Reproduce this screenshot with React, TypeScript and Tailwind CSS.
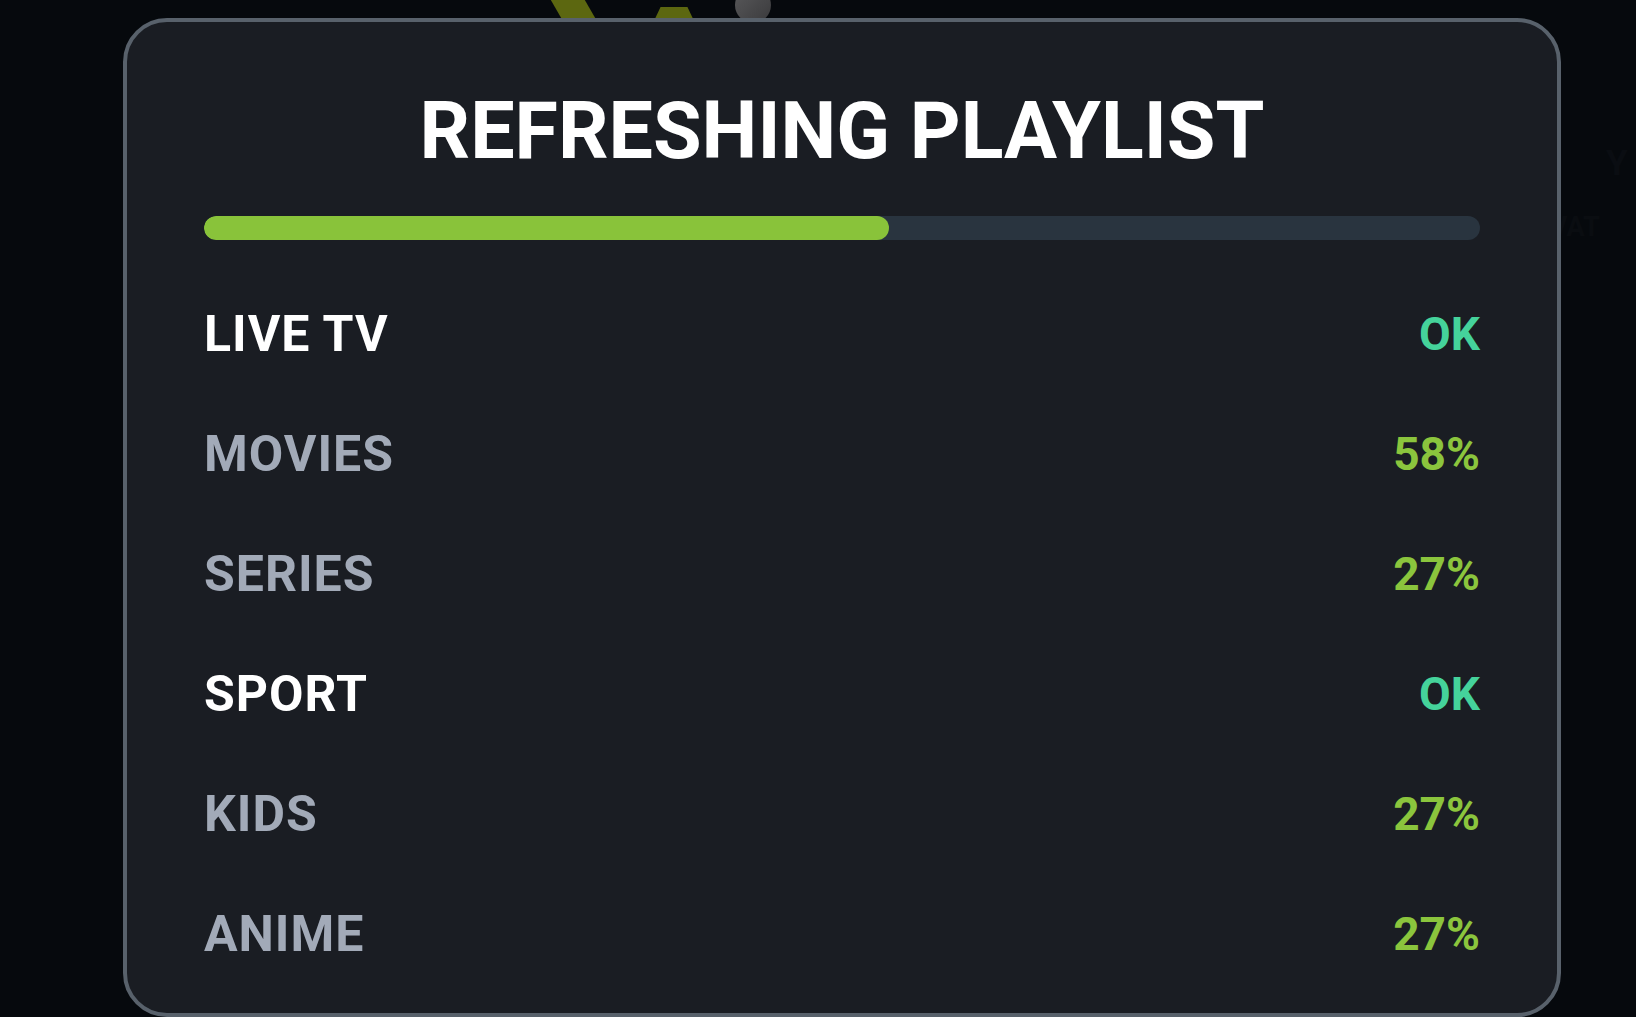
import React from "react";

type Row = { label: string; status: string; done: boolean };

const rows: Row[] = [
  { label: "LIVE TV", status: "OK", done: true },
  { label: "MOVIES", status: "58%", done: false },
  { label: "SERIES", status: "27%", done: false },
  { label: "SPORT", status: "OK", done: true },
  { label: "KIDS", status: "27%", done: false },
  { label: "ANIME", status: "27%", done: false },
];

const progress = 53.7;

export default function App() {
  return (
    <div
      className="relative h-[1017px] w-full overflow-hidden bg-[#06090d]"
      style={{ fontFamily: "Roboto, 'Liberation Sans', sans-serif" }}
    >
      {/* bits of the screen behind the dialog */}
      <div className="absolute left-[556px] top-[-4px] h-[26px] w-[34px] skew-x-[30deg] bg-[#5c6710]" />
      <div className="absolute left-[653px] top-[7px] h-[16px] w-[42px] bg-[#5c6710] [clip-path:polygon(18%_0,82%_0,100%_100%,0_100%)]" />
      <div className="absolute left-[735px] top-[-13px] h-[36px] w-[36px] rounded-full bg-gradient-to-br from-[#5a5a5c] to-[#3a3a3c]" />
      <div className="absolute left-[1606px] top-[146px] text-[35px] font-bold leading-none text-[#0a0d12]">Y</div>
      <div className="absolute left-[1490px] top-[214px] text-[27px] font-bold leading-none text-[#0a0d11]">ACTIVAT</div>

      <div className="relative ml-[123px] mt-[18px] flex h-[999px] w-[1438px] flex-col rounded-[44px] border-4 border-[#58616b] bg-[#1a1d23] px-[77px] pt-[70px]">
        <h1 className="text-center text-[79px] font-bold leading-none text-white">REFRESHING PLAYLIST</h1>

        <div className="mt-[45px] h-[24px] w-full overflow-hidden rounded-full bg-[#29343f]">
          <div className="h-full rounded-full bg-[#89c33a]" style={{ width: `${progress}%` }} />
        </div>

        <div className="mt-[34px] flex flex-col">
          {rows.map((r) => (
            <div key={r.label} className="flex h-[120px] items-center justify-between font-bold leading-none">
              <span className={`text-[50px] tracking-[1px] ${r.done ? "text-white" : "text-[#a2aab8]"}`}>{r.label}</span>
              <span className={`text-[46px] ${r.done ? "text-[#45d39b]" : "text-[#8bc53d]"}`}>{r.status}</span>
            </div>
          ))}
        </div>
      </div>
    </div>
  );
}
